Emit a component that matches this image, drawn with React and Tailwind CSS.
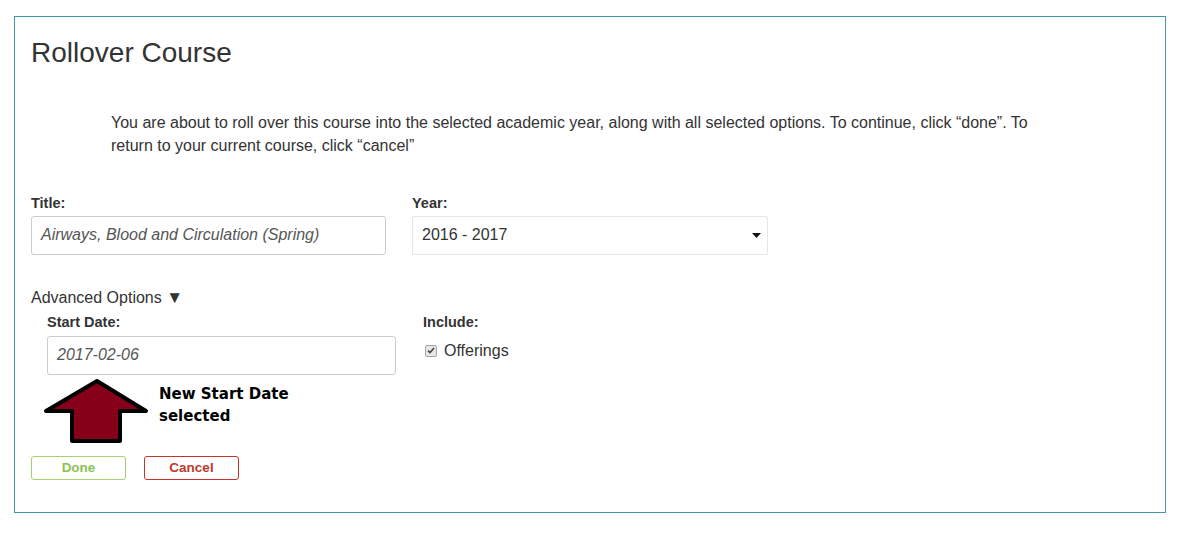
export default function App() {
  return (
    <div className="min-h-[533px] bg-white pt-4 pl-[14px] font-['Liberation_Sans',Arial,sans-serif] text-[#333]">
      <div className="w-[1152px] border border-[#3c98aa] px-4 pt-[20px] pb-[32px]">
        <h2 className="text-[28px] leading-[32px] text-[#333]">Rollover Course</h2>

        <p className="mt-[42px] ml-[80px] w-[940px] text-[16px] leading-[23.4px]">
          You are about to roll over this course into the selected academic year, along with all selected options. To
          continue, click “done”. To return to your current course, click “cancel”
        </p>

        <div className="mt-[36px] flex gap-[26px]">
          <div className="w-[355px]">
            <label className="block text-[14.5px] font-bold leading-[19px]">Title:</label>
            <div className="mt-[3px] flex h-[39px] items-center rounded-[3px] border border-[#cccccc] px-[9px] text-[16px] italic text-[#555]">
              Airways, Blood and Circulation (Spring)
            </div>
          </div>
          <div className="w-[356px]">
            <label className="block text-[14.5px] font-bold leading-[19px]">Year:</label>
            <div className="mt-[3px] flex h-[39px] items-center justify-between rounded-[2px] border border-[#e6e6e6] pl-[9px] pr-[6px] text-[16px] text-[#333]">
              <span>2016 - 2017</span>
              <svg width="9" height="5" viewBox="0 0 9 5">
                <path d="M0 0 H9 L4.5 5 Z" fill="#111" />
              </svg>
            </div>
          </div>
        </div>

        <div className="mt-[32px] text-[16px] leading-[22px]">
          Advanced Options <span className="text-[17px]">▼</span>
        </div>

        <div className="mt-[3px] flex pl-[16px]">
          <div className="w-[349px]">
            <label className="block text-[14.5px] font-bold leading-[20px]">Start Date:</label>
            <div className="mt-[4px] flex h-[39px] items-center rounded-[3px] border border-[#cccccc] px-[9px] text-[16px] italic text-[#555]">
              2017-02-06
            </div>
          </div>
          <div className="ml-[27px]">
            <label className="block text-[14.5px] font-bold leading-[20px]">Include:</label>
            <div className="mt-[9px] flex items-center gap-[7px] pl-[2px] text-[16px] leading-[20px]">
              <span className="flex h-[12px] w-[12px] items-center justify-center rounded-[2px] border border-[#a5a5a5] bg-[#e6e6e6]">
                <svg width="8" height="7" viewBox="0 0 8 7">
                  <path d="M1 3.6 L3 5.6 L7 1" fill="none" stroke="#444" strokeWidth="1.6" />
                </svg>
              </span>
              <span>Offerings</span>
            </div>
          </div>
        </div>

        <div className="flex">
          <svg className="ml-[9px]" width="112" height="72" viewBox="0 0 112 72">
            <polygon
              points="57,6 106,36 80,36 80,66 32,66 32,36 6,36"
              fill="#850018"
              stroke="#000"
              strokeWidth="4"
              strokeLinejoin="round"
            />
          </svg>
          <div className="mt-[8px] ml-[7px] font-['DejaVu_Sans',Verdana,sans-serif] text-[15px] font-bold leading-[22px] text-black">
            New Start Date
            <br />
            selected
          </div>
        </div>

        <div className="mt-[9px] flex gap-[18px]">
          <button
            type="button"
            className="h-[24px] w-[95px] rounded-[3px] border border-[#a5d06e] text-[13.5px] font-bold text-[#8cc15a]"
          >
            Done
          </button>
          <button
            type="button"
            className="h-[24px] w-[95px] rounded-[3px] border border-[#c9302c] text-[13.5px] font-bold text-[#c0392b]"
          >
            Cancel
          </button>
        </div>
      </div>
    </div>
  );
}
